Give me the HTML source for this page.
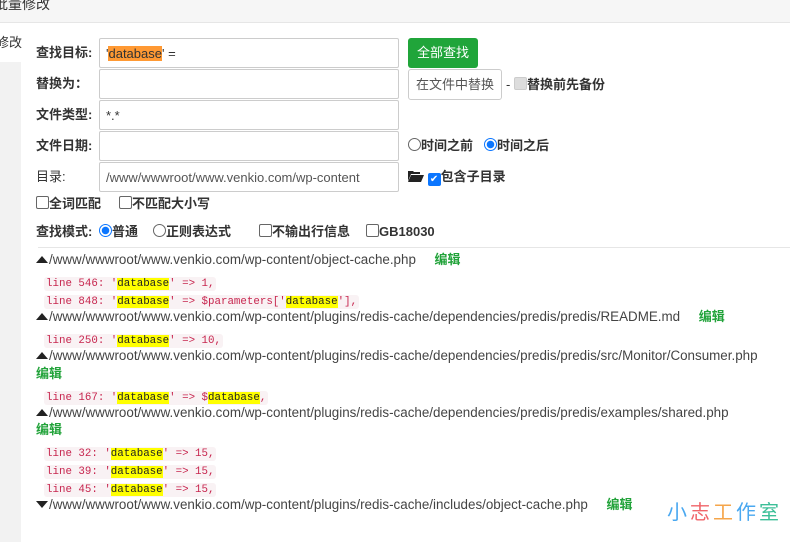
<!DOCTYPE html>
<html><head><meta charset="utf-8"><style>
body{margin:0;width:790px;height:542px;overflow:hidden;background:#fff;font-family:"Liberation Sans","Noto Sans CJK SC",sans-serif;font-size:13px;color:#333;position:relative}
.hdr{position:absolute;left:0;top:0;width:790px;height:22px;background:#f6f6f6;border-bottom:1px solid #e6e6e6}
.hdr span{position:absolute;left:-6px;top:-6px;font-size:14px;color:#333}
.side{position:absolute;left:0;top:62px;width:21px;height:480px;background:#f2f2f2}
.a{position:absolute;white-space:nowrap;line-height:16px}
.lbl{font-weight:bold;color:#333}
.inp{position:absolute;left:99px;width:298px;height:28px;border:1px solid #ccc;border-radius:2px;background:#fff}
.inp span{position:absolute;left:6px;top:7px}
.btn{position:absolute;border-radius:3px}
.code{font-family:"Liberation Mono","DejaVu Sans Mono",monospace;font-size:10.8px;color:#c7254e;background:#f9f2f4;padding:1px 2px;border-radius:3px}
.y{background:#ff0;color:#222}
.path{color:#444;font-size:13.4px}
.ed{color:#22a33a;font-weight:bold;font-size:13px}
.tri{display:inline-block;width:0;height:0;border-left:6px solid transparent;border-right:6px solid transparent;border-bottom:7px solid #222;vertical-align:1px;margin-right:1px}
.trid{border-bottom:none;border-top:7px solid #222}
.cb{display:inline-block;width:11px;height:11px;border:1px solid #666;border-radius:2px;vertical-align:-1px;background:#fff}
.rd{display:inline-block;border:1px solid #666;border-radius:50%;vertical-align:-1px;background:#fff;box-sizing:border-box;width:13px;height:13px}
.rdon{border:1px solid #0b76ff;background:radial-gradient(circle,#0b76ff 0 3.5px,#fff 4px)}
.cbon{background:#0b76ff;border-color:#0b76ff;color:#fff;font-size:10px;line-height:11px;text-align:center}
</style></head><body>
<div class="hdr"><span>批量修改</span></div>
<div class="a" style="left:-4px;top:35px">修改</div>
<div class="side"></div>

<div class="a lbl" style="left:36px;top:45px">查找目标:</div>
<div class="inp" style="top:38px"><span style="left:6px">'<span style="position:static;background:#ff9933">database</span>' =</span></div>
<div class="btn" style="left:408px;top:38px;width:70px;height:30px;background:#20a53a;color:#fff;text-align:center;line-height:30px">全部查找</div>

<div class="a lbl" style="left:36px;top:76px">替换为：</div>
<div class="inp" style="top:69px"></div>
<div class="btn" style="left:408px;top:69px;width:92px;height:29px;border:1px solid #ccc;background:#fff;color:#555;text-align:center;line-height:29px">在文件中替换</div>
<div class="a" style="left:506px;top:77px">- <span class="cb" style="background:#ddd;border-color:#ccc"></span><b>替换前先备份</b></div>

<div class="a lbl" style="left:36px;top:107px">文件类型:</div>
<div class="inp" style="top:100px"><span>*.*</span></div>

<div class="a lbl" style="left:36px;top:138px">文件日期:</div>
<div class="inp" style="top:131px"></div>
<div class="a" style="left:408px;top:138px"><span class="rd"></span><b>时间之前</b></div>
<div class="a" style="left:484px;top:138px"><span class="rd rdon"></span><b>时间之后</b></div>

<div class="a lbl" style="left:36px;top:169px;font-weight:normal">目录:</div>
<div class="inp" style="top:162px"><span style="color:#555">/www/wwwroot/www.venkio.com/wp-content</span></div>
<div class="a" style="left:408px;top:169px"><svg width="16" height="12" viewBox="0 0 16 12" style="vertical-align:-1px"><path d="M0 1h5l1 1h6v2H3L0 11z" fill="#222"/><path d="M3 5h13l-3 7H0z" fill="#222"/></svg> <span class="cb cbon">✔</span><b>包含子目录</b></div>

<div class="a" style="left:36px;top:196px"><span class="cb"></span><b>全词匹配</b></div>
<div class="a" style="left:119px;top:196px"><span class="cb"></span><b>不匹配大小写</b></div>

<div class="a lbl" style="left:36px;top:224px">查找模式:</div>
<div class="a" style="left:99px;top:224px"><span class="rd rdon"></span><b>普通</b></div>
<div class="a" style="left:153px;top:224px"><span class="rd"></span><b>正则表达式</b></div>
<div class="a" style="left:259px;top:224px"><span class="cb"></span><b>不输出行信息</b></div>
<div class="a" style="left:366px;top:224px"><span class="cb"></span><b>GB18030</b></div>
<div class="a" style="left:38px;top:247px;width:752px;border-top:1px solid #e6e6e6"></div>

<div class="a path" style="left:36px;top:252px"><span class="tri"></span>/www/wwwroot/www.venkio.com/wp-content/object-cache.php &nbsp;&nbsp;&nbsp;&nbsp;<span class="ed">编辑</span></div>
<div class="a" style="left:44px;top:274px"><span class="code">line 546: '<span class="y">database</span>' =&gt; 1,</span></div>
<div class="a" style="left:44px;top:292px"><span class="code">line 848: '<span class="y">database</span>' =&gt; $parameters['<span class="y">database</span>'],</span></div>
<div class="a path" style="left:36px;top:309px"><span class="tri"></span>/www/wwwroot/www.venkio.com/wp-content/plugins/redis-cache/dependencies/predis/predis/README.md &nbsp;&nbsp;&nbsp;&nbsp;<span class="ed">编辑</span></div>
<div class="a" style="left:44px;top:331px"><span class="code">line 250: '<span class="y">database</span>' =&gt; 10,</span></div>
<div class="a path" style="left:36px;top:348px"><span class="tri"></span>/www/wwwroot/www.venkio.com/wp-content/plugins/redis-cache/dependencies/predis/predis/src/Monitor/Consumer.php</div>
<div class="a ed" style="left:36px;top:366px">编辑</div>
<div class="a" style="left:44px;top:388px"><span class="code">line 167: '<span class="y">database</span>' =&gt; $<span class="y">database</span>,</span></div>
<div class="a path" style="left:36px;top:405px"><span class="tri"></span>/www/wwwroot/www.venkio.com/wp-content/plugins/redis-cache/dependencies/predis/predis/examples/shared.php</div>
<div class="a ed" style="left:36px;top:422px">编辑</div>
<div class="a" style="left:44px;top:444px"><span class="code">line 32: '<span class="y">database</span>' =&gt; 15,</span></div>
<div class="a" style="left:44px;top:462px"><span class="code">line 39: '<span class="y">database</span>' =&gt; 15,</span></div>
<div class="a" style="left:44px;top:480px"><span class="code">line 45: '<span class="y">database</span>' =&gt; 15,</span></div>
<div class="a path" style="left:36px;top:497px"><span class="tri trid"></span>/www/wwwroot/www.venkio.com/wp-content/plugins/redis-cache/includes/object-cache.php &nbsp;&nbsp;&nbsp;&nbsp;<span class="ed">编辑</span></div>

<div class="a" style="left:667px;top:502px;font-size:20px;line-height:22px;letter-spacing:3px"><span style="color:#4aa8f0">小</span><span style="color:#f0656a">志</span><span style="color:#f5a54a">工</span><span style="color:#4aa8f0">作</span><span style="color:#3cbf98">室</span></div>
</body></html>
